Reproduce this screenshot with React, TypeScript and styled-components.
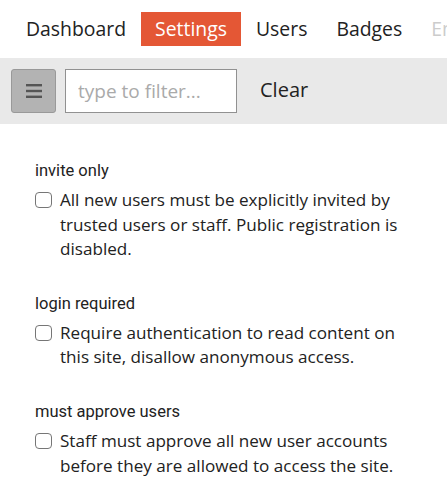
import React from "react";
import styled, { createGlobalStyle } from "styled-components";

const Global = createGlobalStyle`
  html, body { margin: 0; padding: 0; background: #fff; }
  body { font-family: "Open Sans", "Noto Sans", sans-serif; color: #222; overflow: hidden; }
  * { box-sizing: border-box; }
`;

const Page = styled.div`
  width: 447px;
  height: 500px;
  overflow: hidden;
`;

const Nav = styled.nav`
  display: flex;
  align-items: center;
  gap: 1px;
  height: 58px;
  padding: 12px 0 12px 12px;
  white-space: nowrap;
  overflow: hidden;
`;

const NavItem = styled.a<{ $active?: boolean; $faded?: boolean }>`
  display: block;
  padding: 0 14px;
  height: 34px;
  line-height: 34px;
  font-size: 19.4px;
  text-decoration: none;
  color: ${(p) => (p.$active ? "#fff" : p.$faded ? "#ccc" : "#222")};
  background: ${(p) => (p.$active ? "#e45735" : "transparent")};
`;

const Toolbar = styled.div`
  display: flex;
  align-items: center;
  height: 66px;
  padding: 0 11px;
  background: #e9e9e9;
  gap: 9px;
`;

const MenuButton = styled.button`
  display: flex;
  align-items: center;
  justify-content: center;
  width: 45px;
  height: 44px;
  padding: 0;
  background: #b3b3b3;
  border: 1px solid #999;
  border-radius: 3px;
  color: #555;
`;

const FilterInput = styled.input`
  width: 172px;
  height: 44px;
  padding: 0 12px;
  border: 1px solid #919191;
  background: #fff;
  font-family: "Open Sans", sans-serif;
  font-size: 19px;
  color: #222;
  outline: none;
  &::placeholder { color: #aaa; }
`;

const ClearButton = styled.button`
  margin-left: 14px;
  background: none;
  border: none;
  padding: 0 0 4px;
  font-family: "Open Sans", sans-serif;
  font-size: 20px;
  color: #222;
`;

const Settings = styled.div`
  display: flex;
  flex-direction: column;
  gap: 31px;
  padding: 36px 45px 0 35px;
`;

const Setting = styled.div`
  display: flex;
  flex-direction: column;
  gap: 6px;
`;

const Name = styled.div`
  font-family: Roboto, "Noto Sans", sans-serif;
  font-size: 16.5px;
  line-height: 22px;
  color: #222;
`;

const Option = styled.label`
  display: flex;
  align-items: flex-start;
  gap: 8px;
  font-size: 17.1px;
  line-height: 24.6px;
  color: #222;
`;

const Box = styled.span`
  flex: none;
  width: 17px;
  height: 16px;
  margin-top: 4px;
  border: 1.5px solid #767676;
  border-radius: 4px;
  background: #fff;
`;

const items = [
  {
    name: "invite only",
    text: "All new users must be explicitly invited by trusted users or staff. Public registration is disabled.",
  },
  {
    name: "login required",
    text: "Require authentication to read content on this site, disallow anonymous access.",
  },
  {
    name: "must approve users",
    text: "Staff must approve all new user accounts before they are allowed to access the site.",
  },
];

export default function App() {
  return (
    <Page>
      <Global />
      <Nav>
        <NavItem>Dashboard</NavItem>
        <NavItem $active>Settings</NavItem>
        <NavItem>Users</NavItem>
        <NavItem>Badges</NavItem>
        <NavItem $faded>Emails</NavItem>
      </Nav>
      <Toolbar>
        <MenuButton aria-label="menu">
          <svg width="16" height="14" viewBox="0 0 16 14">
            <rect x="0" y="0" width="16" height="2.4" fill="#555" />
            <rect x="0" y="5.8" width="16" height="2.4" fill="#555" />
            <rect x="0" y="11.6" width="16" height="2.4" fill="#555" />
          </svg>
        </MenuButton>
        <FilterInput placeholder="type to filter..." />
        <ClearButton>Clear</ClearButton>
      </Toolbar>
      <Settings>
        {items.map((it) => (
          <Setting key={it.name}>
            <Name>{it.name}</Name>
            <Option>
              <Box />
              <span>{it.text}</span>
            </Option>
          </Setting>
        ))}
      </Settings>
    </Page>
  );
}
